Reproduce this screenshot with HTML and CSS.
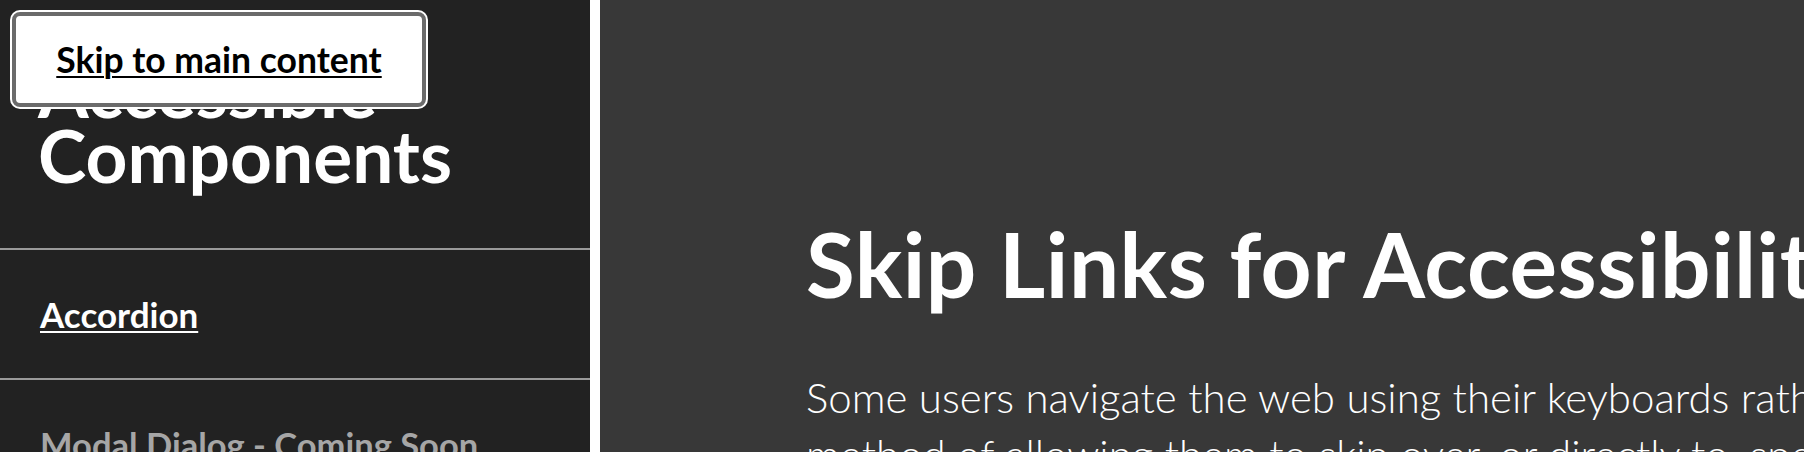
FILE: index.html
```html
<!DOCTYPE html>
<html lang="en">
<head>
<meta charset="utf-8">
<title>Skip Links for Accessibility</title>
<link rel="stylesheet" href="styles.css">
</head>
<body>
<a class="skip-link" href="#main">Skip to main content</a>
<div class="layout">
  <aside class="sidebar">
    <h1 class="site-title">Accessible Components</h1>
    <nav class="side-nav">
      <ul class="nav-list">
        <li class="nav-item"><a class="nav-link" href="#accordion">Accordion</a></li>
        <li class="nav-item"><span class="nav-soon">Modal Dialog - Coming Soon</span></li>
      </ul>
    </nav>
  </aside>
  <main class="main" id="main">
    <h2 class="page-title">Skip Links for Accessibility</h2>
    <p class="lead">Some users navigate the web using their keyboards rather than a mouse. Skip links provide a<br>method of allowing them to skip over, or directly to, specific sections of content on a page.</p>
  </main>
</div>
</body>
</html>
```

FILE: styles.css
```css
html, body {
  margin: 0;
  padding: 0;
  height: 100%;
}

body {
  font-family: Lato, "Liberation Sans", sans-serif;
  background: #383838;
  color: #fff;
  overflow: hidden;
}

.skip-link {
  position: absolute;
  top: 12px;
  left: 12px;
  width: 414px;
  height: 95px;
  box-sizing: border-box;
  display: flex;
  align-items: center;
  justify-content: center;
  background: #fff;
  color: #000;
  border: 4px solid #6b6b6b;
  border-radius: 8px;
  box-shadow: 0 0 0 2px #fff;
  font-weight: 700;
  font-size: 35.5px;
  text-decoration: underline;
  text-decoration-thickness: 2px;
  text-underline-offset: 3px;
  z-index: 10;
}

.layout {
  display: flex;
  min-height: 100vh;
}

.sidebar {
  width: 590px;
  flex: 0 0 590px;
  background: #222;
  border-right: 10px solid #fff;
}

.site-title {
  margin: 0;
  padding: 58px 40px 0 38px;
  height: 190px;
  font-size: 73px;
  line-height: 65px;
  font-weight: 700;
}

.nav-list {
  list-style: none;
  margin: 0;
  padding: 0;
}

.nav-item {
  border-top: 2px solid #9a9a9a;
  height: 128px;
  display: flex;
  align-items: center;
  padding: 0 40px;
}

.nav-link {
  color: #fff;
  font-weight: 700;
  font-size: 35px;
  text-decoration: underline;
  text-decoration-thickness: 2px;
  text-underline-offset: 3px;
}

.nav-soon {
  color: #a6a6a6;
  font-weight: 700;
  font-size: 34.5px;
}

.main {
  flex: 1;
  min-width: 0;
  padding: 219px 0 0 206px;
}

.page-title {
  margin: 0 0 61px 0;
  font-size: 89px;
  line-height: 1;
  font-weight: 700;
  letter-spacing: 0.5px;
  white-space: nowrap;
}

.lead {
  margin: 0;
  font-size: 42px;
  line-height: 57px;
  font-weight: 300;
  white-space: nowrap;
}
```
